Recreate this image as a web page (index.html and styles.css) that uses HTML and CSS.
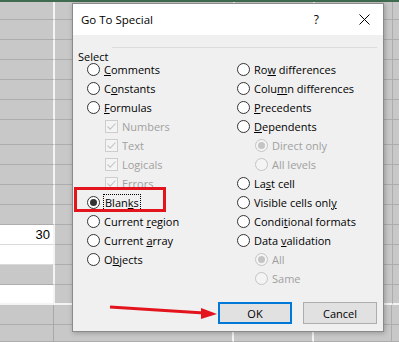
FILE: index.html
```html
<!DOCTYPE html>
<html lang="en">
<head>
  <meta charset="UTF-8" />
  <title>Go To Special</title>
  <link rel="stylesheet" href="styles.css">
</head>
<body>
  <!-- Worksheet behind the dialog -->
  <div class="sheet">
    <div class="row first"><div class="cell a"></div><div class="cell b"></div><div class="cell c"></div><div class="cell d"></div><div class="cell e"></div></div>
    <div class="row"><div class="cell a"></div><div class="cell b"></div><div class="cell c"></div><div class="cell d"></div><div class="cell e"></div></div>
    <div class="row"><div class="cell a"></div><div class="cell b"></div><div class="cell c"></div><div class="cell d"></div><div class="cell e"></div></div>
    <div class="row"><div class="cell a"></div><div class="cell b"></div><div class="cell c"></div><div class="cell d"></div><div class="cell e"></div></div>
    <div class="row"><div class="cell a"></div><div class="cell b"></div><div class="cell c"></div><div class="cell d"></div><div class="cell e"></div></div>
    <div class="row"><div class="cell a"></div><div class="cell b"></div><div class="cell c"></div><div class="cell d"></div><div class="cell e"></div></div>
    <div class="row tall"><div class="cell a"></div><div class="cell b"></div><div class="cell c"></div><div class="cell d"></div><div class="cell e"></div></div>
    <div class="row"><div class="cell a"></div><div class="cell b"></div><div class="cell c"></div><div class="cell d"></div><div class="cell e"></div></div>
    <div class="row"><div class="cell a"></div><div class="cell b"></div><div class="cell c"></div><div class="cell d"></div><div class="cell e"></div></div>
    <div class="row"><div class="cell a"></div><div class="cell b"></div><div class="cell c"></div><div class="cell d"></div><div class="cell e"></div></div>
    <div class="row"><div class="cell a"></div><div class="cell b"></div><div class="cell c"></div><div class="cell d"></div><div class="cell e"></div></div>
    <div class="row"><div class="cell a blank">30</div><div class="cell b"></div><div class="cell c"></div><div class="cell d"></div><div class="cell e"></div></div>
    <div class="row"><div class="cell a blank"></div><div class="cell b"></div><div class="cell c"></div><div class="cell d"></div><div class="cell e"></div></div>
    <div class="row"><div class="cell a"></div><div class="cell b"></div><div class="cell c"></div><div class="cell d"></div><div class="cell e"></div></div>
    <div class="row edge"><div class="cell a blank"></div><div class="cell b"></div><div class="cell c"></div><div class="cell d"></div><div class="cell e"></div></div>
    <div class="row below"><div class="cell a"></div><div class="cell b"></div><div class="cell c"></div><div class="cell d"></div><div class="cell e"></div></div>
    <div class="row below last"><div class="cell a"></div><div class="cell b"></div><div class="cell c"></div><div class="cell d"></div><div class="cell e"></div></div>
  </div>

  <!-- Go To Special dialog -->
  <div class="dialog">
    <div class="titlebar">
      <span class="title">Go To Special</span>
      <span class="help">?</span>
      <svg class="close" width="11" height="11" viewBox="0 0 11 11">
        <path d="M0.5 0.5 L10.5 10.5 M10.5 0.5 L0.5 10.5" stroke="#000" stroke-width="1" fill="none"/>
      </svg>
    </div>

    <div class="body">
      <div class="group-head">
        <span class="group-label">Select</span>
        <span class="group-line"></span>
      </div>

      <div class="options">
        <div class="col">
          <div class="opt"><span class="radio"></span><span><u>C</u>omments</span></div>
          <div class="opt"><span class="radio"></span><span>C<u>o</u>nstants</span></div>
          <div class="opt"><span class="radio"></span><span><u>F</u>ormulas</span></div>
          <div class="opt sub off"><span class="check"><svg width="11" height="11" viewBox="0 0 11 11"><path d="M1.5 5.5 L4.2 8.2 L9.5 2.5" stroke="#c4c4c4" stroke-width="1.1" fill="none"/></svg></span><span>Numbers</span></div>
          <div class="opt sub off"><span class="check"><svg width="11" height="11" viewBox="0 0 11 11"><path d="M1.5 5.5 L4.2 8.2 L9.5 2.5" stroke="#c4c4c4" stroke-width="1.1" fill="none"/></svg></span><span>Text</span></div>
          <div class="opt sub off"><span class="check"><svg width="11" height="11" viewBox="0 0 11 11"><path d="M1.5 5.5 L4.2 8.2 L9.5 2.5" stroke="#c4c4c4" stroke-width="1.1" fill="none"/></svg></span><span>Logicals</span></div>
          <div class="opt sub off"><span class="check"><svg width="11" height="11" viewBox="0 0 11 11"><path d="M1.5 5.5 L4.2 8.2 L9.5 2.5" stroke="#c4c4c4" stroke-width="1.1" fill="none"/></svg></span><span>Errors</span></div>
          <div class="opt"><span class="radio on"></span><span class="focus">Blan<u>k</u>s</span></div>
          <div class="opt"><span class="radio"></span><span>Current <u>r</u>egion</span></div>
          <div class="opt"><span class="radio"></span><span>Current <u>a</u>rray</span></div>
          <div class="opt"><span class="radio"></span><span>O<u>b</u>jects</span></div>
        </div>
        <div class="col">
          <div class="opt"><span class="radio"></span><span>Ro<u>w</u> differences</span></div>
          <div class="opt"><span class="radio"></span><span>Colu<u>m</u>n differences</span></div>
          <div class="opt"><span class="radio"></span><span><u>P</u>recedents</span></div>
          <div class="opt"><span class="radio"></span><span><u>D</u>ependents</span></div>
          <div class="opt sub off"><span class="radio on"></span><span>Direct only</span></div>
          <div class="opt sub off"><span class="radio"></span><span>All levels</span></div>
          <div class="opt"><span class="radio"></span><span>La<u>s</u>t cell</span></div>
          <div class="opt"><span class="radio"></span><span>Visible cells onl<u>y</u></span></div>
          <div class="opt"><span class="radio"></span><span>Condi<u>t</u>ional formats</span></div>
          <div class="opt"><span class="radio"></span><span>Data <u>v</u>alidation</span></div>
          <div class="opt sub off"><span class="radio on"></span><span>All</span></div>
          <div class="opt sub off"><span class="radio"></span><span>Same</span></div>
        </div>
      </div>

      <div class="footer">
        <button class="btn default">OK</button>
        <button class="btn">Cancel</button>
      </div>
    </div>
  </div>

  <!-- Annotations -->
  <div class="mark-box"></div>
  <svg class="arrow" width="399" height="342" viewBox="0 0 399 342">
    <line x1="110" y1="307" x2="204" y2="313" stroke="#e3141c" stroke-width="3"/>
    <polygon points="217,314 201,308 201,319" fill="#e3141c"/>
  </svg>
</body>
</html>
```

FILE: styles.css
```css
* {
  box-sizing: border-box;
}

body {
  margin: 0;
  width: 399px;
  height: 342px;
  overflow: hidden;
  position: relative;
  font-family: "Open Sans", "Noto Sans", sans-serif;
  font-size: 11px;
  background: #c8c8c8;
}

/* worksheet */
.sheet {
  border-top: 2px solid #3f6b52;
  display: flex;
  flex-direction: column;
}

.row {
  display: flex;
  height: 20px;
}

.row.first {
  height: 18px;
}

.row.tall {
  height: 25px;
}

.row.last {
  height: 17px;
}

.cell {
  background: #c8c8c8;
  border-bottom: 1px solid #adadad;
  border-right: 2px solid #f4f4f4;
}

.cell.a {
  width: 55px;
  text-align: right;
  padding-right: 3px;
  font-family: "Liberation Sans", Arial, sans-serif;
  font-size: 13px;
  line-height: 19px;
}

.cell.b {
  width: 180px;
}

.cell.c {
  width: 80px;
}

.cell.d {
  width: 78px;
  border-right: 1px solid #adadad;
}

.cell.e {
  flex: 1;
  border-right: none;
}

.cell.blank {
  background: #fff;
  border-bottom-color: #dadada;
}

.row.edge .cell {
  border-bottom: 2px solid #f4f4f4;
}

.row.below .cell.a {
  border-right: 1px solid #a8a8a8;
  width: 54px;
}

/* dialog */
.dialog {
  position: absolute;
  left: 72px;
  top: 3px;
  width: 312px;
  height: 329px;
  border: 1px solid #8a8a8a;
  background: #f0f0f0;
  box-shadow: 1px 1px 5px rgba(0, 0, 0, 0.25);
  display: flex;
  flex-direction: column;
  color: #000;
}

.titlebar {
  height: 31px;
  background: #fff;
  display: flex;
  align-items: center;
  padding-left: 8px;
  font-size: 11.5px;
}

.title {
  flex: 1;
}

.help {
  margin-right: 40px;
  font-size: 12px;
}

.close {
  margin-right: 13px;
}

.body {
  flex: 1;
  display: flex;
  flex-direction: column;
  padding: 12px 6px 7px 5px;
}

.group-head {
  display: flex;
  height: 13px;
  gap: 4px;
}

.group-label {
  line-height: 16px;
  margin-top: 2px;
  height: 16px;
}

.group-line {
  flex: 1;
  height: 1px;
  background: #dcdcdc;
}

.options {
  display: flex;
  padding-left: 9px;
}

.col {
  display: flex;
  flex-direction: column;
}

.col:first-child {
  width: 150px;
}

.opt {
  height: 19px;
  display: flex;
  align-items: center;
  gap: 4px;
  white-space: nowrap;
}

.opt.sub {
  padding-left: 18px;
}

.opt.off {
  color: #a0a0a0;
}

.radio {
  width: 13px;
  height: 13px;
  border: 1px solid #333;
  border-radius: 50%;
  background: #fff;
  display: flex;
  align-items: center;
  justify-content: center;
  flex-shrink: 0;
}

.radio.on::after {
  content: "";
  width: 7px;
  height: 7px;
  border-radius: 50%;
  background: #333;
}

.off .radio {
  border-color: #c4c4c4;
  background: #f4f4f4;
}

.off .radio.on::after {
  background: #c4c4c4;
}

.check {
  width: 13px;
  height: 13px;
  border: 1px solid #cdcdcd;
  background: #f4f4f4;
  display: flex;
  align-items: center;
  justify-content: center;
  flex-shrink: 0;
}

.focus {
  outline: 1px dotted #000;
  padding: 0 1px;
  line-height: 15px;
}

.footer {
  margin-top: auto;
  display: flex;
  justify-content: flex-end;
  gap: 11px;
}

.btn {
  width: 74px;
  height: 22px;
  border: 1px solid #adadad;
  background: #e1e1e1;
  font-family: "Open Sans", "Noto Sans", sans-serif;
  font-size: 11px;
  color: #000;
  padding: 0;
}

.btn.default {
  border: 2px solid #0078d7;
}

/* annotations */
.mark-box {
  position: absolute;
  left: 74px;
  top: 187px;
  width: 92px;
  height: 25px;
  border: 3px solid #e3141c;
}

.arrow {
  position: absolute;
  left: 0;
  top: 0;
}
```
